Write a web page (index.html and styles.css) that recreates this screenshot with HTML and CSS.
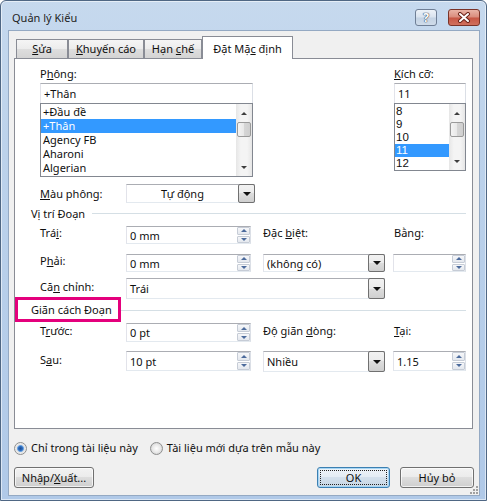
FILE: index.html
```html
<!DOCTYPE html>
<html>
<head>
<meta charset="utf-8">
<link rel="stylesheet" href="styles.css">
</head>
<body>
<div class="window">
  <div class="titlebar">
    <span class="title">Quản lý Kiểu</span>
    <div class="tb help"><span>?</span></div>
    <div class="tb close">
      <svg width="14" height="11" viewBox="0 0 14 11"><path d="M3 2 L11 9 M11 2 L3 9" stroke="#6a2218" stroke-width="4" stroke-linecap="round"/><path d="M3 2 L11 9 M11 2 L3 9" stroke="#fff" stroke-width="2" stroke-linecap="round"/></svg>
    </div>
  </div>
  <div class="client">
    <div class="tabs">
      <div class="tab w1"><span><u>S</u>ửa</span></div>
      <div class="tab w2"><span><u>K</u>huyến cáo</span></div>
      <div class="tab w3"><span>Hạn <u>c</u>hế</span></div>
      <div class="tab active"><span>Đặt Mặ<u>c</u> định</span></div>
    </div>
    <div class="panel">
      <div class="top">
        <div class="fontcol">
          <div class="lbl">P<u>h</u>ông:</div>
          <div class="textbox">+Thân</div>
          <div class="list flist">
            <div class="items">
              <div class="item">+Đầu đề</div>
              <div class="item sel">+Thân</div>
              <div class="item">Agency FB</div>
              <div class="item">Aharoni</div>
              <div class="item">Algerian</div>
            </div>
            <div class="vscroll">
              <div class="sarrow"><i class="up"></i></div>
              <div class="thumb"></div>
              <div class="sfill"></div>
              <div class="sarrow"><i class="down"></i></div>
            </div>
          </div>
        </div>
        <div class="sizecol">
          <div class="lbl"><u>K</u>ích cỡ:</div>
          <div class="textbox">11</div>
          <div class="list slist">
            <div class="items">
              <div class="item">8</div>
              <div class="item">9</div>
              <div class="item">10</div>
              <div class="item sel">11</div>
              <div class="item">12</div>
            </div>
            <div class="vscroll">
              <div class="sarrow"><i class="up"></i></div>
              <div class="thumb"></div>
              <div class="sfill"></div>
              <div class="sarrow"><i class="down"></i></div>
            </div>
          </div>
        </div>
      </div>

      <div class="r-color">
        <div class="lbl"><u>M</u>àu phông:</div>
        <div class="dd ddcolor"><div class="dv">Tự động</div><div class="db"><i></i></div></div>
      </div>

      <div class="heading h1"><span>Vị trí Đoạn</span><div class="line"></div></div>

      <div class="frow r-trai">
        <div class="lbl">Trá<u>i</u>:</div>
        <div class="spin"><div class="val">0 mm</div><div class="sp"><div><i class="up"></i></div><div><i class="down"></i></div></div></div>
        <div class="lbl">Đặc <u>b</u>iệt:</div>
        <div class="lbl">Bằn<u>g</u>:</div>
      </div>

      <div class="frow r-phai">
        <div class="lbl">P<u>h</u>ải:</div>
        <div class="spin"><div class="val">0 mm</div><div class="sp"><div><i class="up"></i></div><div><i class="down"></i></div></div></div>
        <div class="dd dd3"><div class="dv">(không có)</div><div class="db"><i></i></div></div>
        <div class="spin spin4"><div class="val"></div><div class="sp"><div><i class="up"></i></div><div><i class="down"></i></div></div></div>
      </div>

      <div class="frow r-can">
        <div class="lbl">Că<u>n</u> chỉnh:</div>
        <div class="dd ddwide"><div class="dv">Trái</div><div class="db"><i></i></div></div>
      </div>

      <div class="heading h2"><span>Giãn cách Đoạn</span><div class="line"></div><div class="hl"></div></div>

      <div class="frow r-truoc">
        <div class="lbl">T<u>r</u>ước:</div>
        <div class="spin"><div class="val">0 pt</div><div class="sp"><div><i class="up"></i></div><div><i class="down"></i></div></div></div>
        <div class="lbl">Độ giãn <u>d</u>òng:</div>
        <div class="lbl"><u>T</u>ại:</div>
      </div>

      <div class="frow r-sau">
        <div class="lbl">S<u>a</u>u:</div>
        <div class="spin"><div class="val">10 pt</div><div class="sp"><div><i class="up"></i></div><div><i class="down"></i></div></div></div>
        <div class="dd dd3 ddtall"><div class="dv">Nhiều</div><div class="db"><i></i></div></div>
        <div class="spin spin4"><div class="val">1.15</div><div class="sp"><div><i class="up"></i></div><div><i class="down"></i></div></div></div>
      </div>
    </div>

    <div class="radios">
      <div class="radio checked"></div><span class="rtext">Chỉ trong tài liệu này</span>
      <div class="radio r2"></div><span class="rtext">Tài liệu mới dựa trên mẫu này</span>
    </div>

    <div class="buttons">
      <div class="btn b-imp">Nhập/<u>X</u>uất...</div>
      <div class="btn b-ok"><span class="focus">OK</span></div>
      <div class="btn b-cancel">Hủy bỏ</div>
    </div>

    <svg class="grip" width="11" height="11" viewBox="0 0 11 11">
      <g fill="#a0a0a0"><rect x="8" y="2" width="2" height="2"/><rect x="5" y="5" width="2" height="2"/><rect x="8" y="5" width="2" height="2"/><rect x="2" y="8" width="2" height="2"/><rect x="5" y="8" width="2" height="2"/><rect x="8" y="8" width="2" height="2"/></g>
    </svg>
  </div>
</div>
</body>
</html>
```

FILE: styles.css
```css
* { box-sizing: border-box; }
html, body { margin: 0; padding: 0; background: #ffffff; }
body {
  font-family: "Noto Sans", "Open Sans", sans-serif;
  font-size: 11px;
  color: #0f0f0f;
}
u { text-decoration: underline; text-underline-offset: 1px; text-decoration-thickness: 1px; }

.window {
  width: 487px;
  height: 501px;
  border: 1px solid #4f6784;
  border-radius: 6px 6px 0 0;
  background: linear-gradient(#c6d9ee, #bcd2eb 30%, #b0c9e8);
  box-shadow: inset 0 0 0 1px rgba(255,255,255,0.55);
  display: flex;
  flex-direction: column;
  padding: 0 6px 4px 7px;
}

.titlebar {
  height: 29px;
  margin: 0 -6px 0 -7px;
  padding: 8px 6px 0 11px;
  display: flex;
  align-items: flex-start;
}
.title { flex: 1; margin-top: 1px; line-height: 16px; color: #1e1e1e; }
.tb {
  height: 17px;
  border: 1px solid #6f7f96;
  border-radius: 3px;
  display: flex;
  align-items: center;
  justify-content: center;
}
.help {
  width: 22px;
  background: linear-gradient(#edf2f8, #d9e3ef 48%, #c4d3e4 52%, #cfdcea);
}
.help span {
  color: #fff;
  font-weight: bold;
  font-size: 12px;
  line-height: 14px;
  text-shadow: 0 0 1px #3b4a60, 0 0 1px #3b4a60, 0 0 1px #3b4a60;
}
.close {
  width: 32px;
  margin-left: 11px;
  border-color: #7a3328;
  background: linear-gradient(#e9b3a6, #d98c7c 48%, #c75644 52%, #d0705d);
}

.client {
  flex: 1;
  position: relative;
  background: #f0f0f0;
  border: 1px solid #94a9c3;
  padding: 5px 5px 0 5px;
  display: flex;
  flex-direction: column;
}

.tabs {
  height: 22px;
  padding-left: 2px;
  display: flex;
  align-items: flex-end;
}
.tab {
  height: 19px;
  border: 1px solid #898c95;
  border-bottom: none;
  background: linear-gradient(#f5f5f5, #ececec 50%, #dedede 50%, #d4d4d4);
  display: flex;
  justify-content: center;
  align-items: center;
  line-height: 14px;
}
.w1 { width: 52px; }
.w2 { width: 76px; }
.w3 { width: 58px; }
.tab.active {
  width: 91px;
  height: 23px;
  margin-bottom: -1px;
  background: #ffffff;
  position: relative;
  z-index: 1;
  padding-top: 1px;
}

.panel {
  width: 459px;
  height: 371px;
  background: #ffffff;
  border: 1px solid #898c95;
  padding-top: 8px;
}

.lbl { line-height: 14px; height: 16px; white-space: nowrap; }

.top { display: flex; padding-left: 25px; }
.fontcol { width: 213px; }
.sizecol { width: 72px; margin-left: 141px; }

.textbox {
  height: 21px;
  border: 1px solid #abadb3;
  border-color: #abadb3 #dbdfe6 #abadb3 #e2e3ea;
  padding-left: 3px;
  line-height: 19px;
  background: #fff;
}
.list {
  margin-top: -1px;
  border: 1px solid #828790;
  display: flex;
  background: #fff;
}
.flist { height: 74px; }
.slist { height: 68px; }
.items { flex: 1; padding: 1px 0 0 0; overflow: hidden; }
.item { height: 14px; line-height: 14px; padding-left: 2px; white-space: nowrap; }
.slist .item {
  height: 13px;
  line-height: 13px;
  padding-left: 1px;
  font-family: "Liberation Sans", Arial, sans-serif;
  font-size: 11.5px;
}
.item.sel { background: #3399ff; color: #fff; }

.vscroll {
  width: 16px;
  background: linear-gradient(90deg, #e6e6e6, #f4f4f4 30%, #f4f4f4 70%, #e6e6e6);
  display: flex;
  flex-direction: column;
  padding: 1px 1px;
}
.sarrow { height: 16px; display: flex; align-items: center; justify-content: center; }
.thumb {
  height: 15px;
  margin-top: 1px;
  border: 1px solid #9a9a9a;
  border-radius: 2px;
  background: linear-gradient(90deg, #f4f4f4, #e8e8e8 50%, #d6d6d6 50%, #cfcfcf);
}
.sfill { flex: 1; }

i.up, i.down { display: block; width: 0; height: 0; border-left: 3px solid transparent; border-right: 3px solid transparent; }
i.up { border-bottom: 3px solid #3e3e3e; }
i.down { border-top: 3px solid #3e3e3e; }

.r-color {
  margin-top: 7px;
  height: 19px;
  padding-left: 25px;
  display: flex;
  align-items: center;
}
.r-color .lbl { width: 86px; height: 14px; }
.ddcolor { width: 129px; height: 19px; }

.heading {
  display: flex;
  align-items: center;
  padding: 0 6px 0 16px;
  position: relative;
}
.heading span { line-height: 14px; white-space: nowrap; }
.heading .line { flex: 1; height: 1px; background: #d5dfe5; margin-left: 7px; }
.h1 { height: 21px; }
.h2 { height: 22px; }
.hl {
  position: absolute;
  left: 0;
  top: -2px;
  width: 106px;
  height: 25px;
  border: 3px solid #e4007c;
}

.frow {
  display: grid;
  grid-template-columns: 86px 137px 131px 72px;
  padding-left: 25px;
}
.r-trai { margin-top: 2px; height: 18px; }
.r-phai { margin-top: 10px; height: 18px; }
.r-can { margin-top: 6px; height: 21px; }
.r-can .lbl { padding-top: 2px; }
.r-truoc { margin-top: 2px; height: 19px; }
.r-truoc .lbl { padding-top: 1px; }
.r-sau { margin-top: 9px; height: 21px; }
.r-sau .lbl { padding-top: 2px; }

.spin {
  width: 125px;
  height: 100%;
  border: 1px solid #abadb3;
  border-color: #abadb3 #dbdfe6 #e3e9ef #e2e3ea;
  background: #fff;
  display: flex;
}
.r-sau .spin { height: 20px; }
.spin .val { flex: 1; padding-left: 3px; white-space: nowrap; display: flex; align-items: center; }
.spin4 { width: 73px; margin-left: -1px; }
.sp {
  width: 13px;
  display: flex;
  flex-direction: column;
  gap: 1px;
}
.sp div {
  flex: 1;
  border: 1px solid #c6ccd6;
  border-radius: 1px;
  background: linear-gradient(#f6f7f9, #e4e8ee);
  display: flex;
  align-items: center;
  justify-content: center;
}
.sp i.up { border-bottom-color: #4c6b9c; }
.sp i.down { border-top-color: #4c6b9c; }

.dd {
  height: 100%;
  border: 1px solid #abadb3;
  border-color: #abadb3 #dbdfe6 #e3e9ef #e2e3ea;
  background: #fff;
  display: flex;
}
.dv { flex: 1; padding-left: 3px; white-space: nowrap; display: flex; align-items: center; }
.ddcolor .dv { justify-content: center; padding-left: 0; }
.db {
  width: 17px;
  margin: -1px -1px -1px 0;
  border: 1px solid #707070;
  border-radius: 2px;
  background: linear-gradient(#f2f2f2, #ebebeb 50%, #dddddd 50%, #cfcfcf);
  display: flex;
  align-items: center;
  justify-content: center;
}
.db i {
  display: block;
  width: 0; height: 0;
  border-left: 4px solid transparent;
  border-right: 4px solid transparent;
  border-top: 4px solid #111;
}
.dd3 { width: 122px; }
.ddtall { height: 21px; }
.ddwide { width: 259px; grid-column: 2 / 4; }

.radios {
  margin-top: 11px;
  height: 16px;
  display: flex;
  align-items: center;
}
.radio {
  width: 13px;
  height: 13px;
  border-radius: 50%;
  border: 1px solid #8e8f8f;
  background: radial-gradient(circle, #ffffff 0, #e8e8e8 4px, #d4d4d4 6px);
}
.radio.checked {
  background: radial-gradient(circle, #1f4f93 0, #2d6bbd 2px, #7aaee5 3.2px, #e4e4e4 3.8px, #f0f0f0 6px);
}
.radio.r2 { margin-left: 12px; }
.rtext { margin-left: 4px; line-height: 14px; white-space: nowrap; }

.buttons {
  margin-top: 11px;
  height: 21px;
  display: flex;
}
.btn {
  height: 21px;
  border: 1px solid #707070;
  border-radius: 3px;
  background: linear-gradient(#f2f2f2, #ebebeb 50%, #dddddd 50%, #cfcfcf);
  box-shadow: inset 0 0 0 1px rgba(255,255,255,0.7);
  display: flex;
  align-items: center;
  justify-content: center;
  line-height: 14px;
}
.b-imp { width: 80px; }
.b-ok {
  width: 73px;
  margin-left: auto;
  border-color: #3c7fb1;
  background: linear-gradient(#eef3f8, #e3ecf4 50%, #d3e0ec 50%, #c7d6e4);
  box-shadow: inset 0 0 0 1px #a6d6f5;
  padding: 2px;
}
.b-ok .focus {
  width: 100%;
  height: 100%;
  border: 1px dotted #222;
  display: flex;
  align-items: center;
  justify-content: center;
}
.b-cancel { width: 74px; margin-left: 10px; }

.grip {
  position: absolute;
  right: 0;
  bottom: 0;
}
```
